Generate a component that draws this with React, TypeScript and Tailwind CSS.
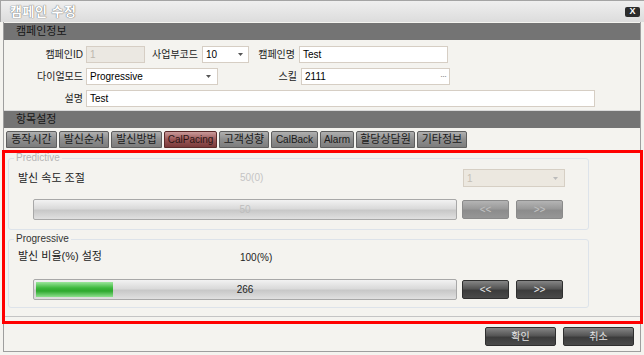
import React from 'react';

const darkBtn =
  'h-[19px] border border-[#2f2f2f] rounded-[2px] bg-[linear-gradient(#858585,#555_45%,#3c3c3c_55%,#4a4a4a)] text-[#e6e6e6] text-[10px] flex items-center justify-center';
const offBtn =
  'h-[19px] border border-[#8a8a8a] rounded-[2px] bg-[linear-gradient(#b4b4b4,#9a9a9a_45%,#8c8c8c_55%,#969696)] text-[#c2c2c2] text-[10px] flex items-center justify-center';
const barBox =
  'relative h-[21px] border border-[#a8a8a8] rounded-[2px] bg-[linear-gradient(#f2f2f2,#dadada_45%,#c8c8c8_55%,#e0e0e0)] flex items-center justify-center text-[10px]';

function Caret({ color = '#555' }: { color?: string }) {
  return (
    <svg width="5" height="3" viewBox="0 0 5 3" className="shrink-0">
      <path d="M0 0h5L2.5 3z" fill={color} />
    </svg>
  );
}

function Label({ text, className }: { text: string; className: string }) {
  return <div className={`text-right text-[#222] leading-none ${className}`}>{text}</div>;
}

function Field({
  children,
  className,
  disabled,
}: {
  children?: React.ReactNode;
  className: string;
  disabled?: boolean;
}) {
  const look = disabled ? 'bg-[#ebe8e2] text-[#bdb7ae]' : 'bg-white text-black';
  return (
    <div className={`h-[17px] border border-[#d6cec4] flex items-center px-[3px] text-[10px] ${look} ${className}`}>
      {children}
    </div>
  );
}

// latin tab captions get a smaller size so they fit like the korean ones
const tabs = [
  { name: '동작시간', w: 'w-[51px] text-[11px]' },
  { name: '발신순서', w: 'w-[50px] text-[11px]' },
  { name: '발신방법', w: 'w-[51px] text-[11px]' },
  { name: 'CalPacing', w: 'w-[53px] text-[10px]', active: true },
  { name: '고객성향', w: 'w-[50px] text-[11px]' },
  { name: 'CalBack', w: 'w-[47px] text-[10px]' },
  { name: 'Alarm', w: 'w-[34px] text-[10px]' },
  { name: '할당상담원', w: 'w-[59px] text-[11px]' },
  { name: '기타정보', w: 'w-[50px] text-[11px]' },
];

export default function App() {
  return (
    <div className="relative w-[644px] h-[355px] overflow-hidden bg-[#f4f3ef] font-['Liberation_Sans','Noto_Sans_CJK_KR',sans-serif] text-[10px]">
      {/* title bar */}
      <div className="h-[22px] flex items-center justify-between pl-[9px] pr-[4px] border-t border-l border-[#a4a4a4] bg-[linear-gradient(#efefef,#dcdcdc)]">
        <span className="text-[13px] leading-none text-white font-bold tracking-[0.5px] [text-shadow:0_0_1px_#707070,0_0_1px_#707070]">
          캠페인 수정
        </span>
        <div className="w-[15px] h-[10px] rounded-[2px] bg-[#2c2c2c] text-white text-[9px] font-bold leading-none flex items-center justify-center">
          X
        </div>
      </div>

      {/* window body */}
      <div className="mx-[3px] h-[330px] border-x border-b border-[#9e9e9e] flex flex-col">
        <div className="h-[17px] mt-[1px] bg-[#747474] flex items-center pl-[12px] text-[#161616] text-[11px] leading-none">
          캠페인정보
        </div>

        <div className="h-[71px] pt-[6px] flex flex-col gap-[5px] border-b border-[#dadada]">
          <div className="flex items-center">
            <Label text="캠페인ID" className="w-[79px]" />
            <Field disabled className="ml-[3px] w-[59px]">1</Field>
            <Label text="사업부코드" className="w-[53px]" />
            <Field className="ml-[4px] w-[47px] justify-between pr-[5px]">
              <span>10</span>
              <Caret />
            </Field>
            <Label text="캠페인명" className="w-[46px]" />
            <Field className="ml-[4px] w-[149px]">Test</Field>
          </div>
          <div className="flex items-center">
            <Label text="다이얼모드" className="w-[79px]" />
            <Field className="ml-[3px] w-[132px] justify-between pr-[6px]">
              <span>Progressive</span>
              <Caret />
            </Field>
            <Label text="스킬" className="w-[79px]" />
            <Field className="ml-[4px] w-[149px] justify-between pr-[3px]">
              <span>2111</span>
              <span className="text-[#888] text-[9px] tracking-[-1px]">···</span>
            </Field>
          </div>
          <div className="flex items-center">
            <Label text="설명" className="w-[79px]" />
            <Field className="ml-[3px] w-[509px]">Test</Field>
          </div>
        </div>

        <div className="h-[17px] bg-[#747474] flex items-center pl-[12px] text-[#161616] text-[11px] leading-none">
          항목설정
        </div>

        {/* tabs */}
        <div className="mt-[3px] h-[17px] flex gap-[2px] pl-[2px]">
          {tabs.map((t) =>
            t.active ? (
              <div
                key={t.name}
                className={`${t.w} h-[17px] rounded-t-[2px] border border-[#5a2a2a] bg-[linear-gradient(#c99a9a,#9a5656_50%,#7a3a3a)] text-[#2a1515] flex items-center justify-center leading-none whitespace-nowrap`}
              >
                {t.name}
              </div>
            ) : (
              <div
                key={t.name}
                className={`${t.w} h-[17px] rounded-t-[2px] border border-[#5e5e5e] bg-[linear-gradient(#b0b0b0,#8e8e8e_50%,#7c7c7c)] text-[#1a1a1a] flex items-center justify-center leading-none whitespace-nowrap`}
              >
                {t.name}
              </div>
            )
          )}
        </div>

        {/* tab body */}
        <div className="mt-[2px] h-[167px] border-b border-[#c4c4c4] pt-[3px] pl-[4px] flex flex-col gap-[4px]">
          <fieldset className="w-[581px] h-[77px] border border-[#dde3ea] rounded-[3px] pl-[9px]">
            <legend className="ml-[-4px] px-[2px] text-[10px] leading-[10px] text-[#b4b4b4]">Predictive</legend>
            <div className="mt-[6px] h-[18px] flex items-center">
              <span className="w-[222px] text-[#222] text-[11px] leading-none">발신 속도 조절</span>
              <span className="w-[223px] text-[#c4c4c4] leading-none">50(0)</span>
              <div className="w-[102px] h-[18px] border border-[#d6cfc4] bg-[#ece8e0] flex items-center justify-between pl-[3px] pr-[6px] text-[#c6c0b6]">
                <span>1</span>
                <Caret color="#bbb" />
              </div>
            </div>
            <div className="mt-[12px] pl-[15px] flex items-center">
              <div className={`${barBox} w-[424px] text-[#bdbdbd]`}>50</div>
              <div className={`${offBtn} ml-[5px] w-[47px]`}>&lt;&lt;</div>
              <div className={`${offBtn} ml-[7px] w-[47px]`}>&gt;&gt;</div>
            </div>
          </fieldset>

          <fieldset className="w-[581px] h-[74px] border border-[#dde3ea] rounded-[3px] pl-[9px]">
            <legend className="ml-[-4px] px-[2px] text-[10px] leading-[10px] text-[#333]">Progressive</legend>
            <div className="mt-[6px] h-[16px] flex items-center">
              <span className="w-[222px] text-[#222] text-[11px] leading-none -mt-[4px]">발신 비율(%) 설정</span>
              <span className="text-[#222] leading-none">100(%)</span>
            </div>
            <div className="mt-[13px] pl-[15px] flex items-center">
              <div className={`${barBox} w-[424px] text-[#222]`}>
                <div className="absolute left-[2px] top-[2px] bottom-[2px] w-[77px] bg-[linear-gradient(#9be69b,#3cb83c_40%,#2ea82e_60%,#8ee08e)]" />
                <span className="relative">266</span>
              </div>
              <div className={`${darkBtn} ml-[5px] w-[47px]`}>&lt;&lt;</div>
              <div className={`${darkBtn} ml-[7px] w-[47px]`}>&gt;&gt;</div>
            </div>
          </fieldset>
        </div>

        {/* footer */}
        <div className="flex-1 flex justify-end items-start pt-[10px] pr-[6px] gap-[7px]">
          <div className={`${darkBtn} w-[71px] h-[18px]`}>확인</div>
          <div className={`${darkBtn} w-[71px] h-[18px]`}>취소</div>
        </div>
      </div>

      {/* red highlight annotation */}
      <div className="absolute left-[2px] top-[150px] w-[641px] h-[174px] border-[3px] border-[#ff0000] pointer-events-none" />
    </div>
  );
}
